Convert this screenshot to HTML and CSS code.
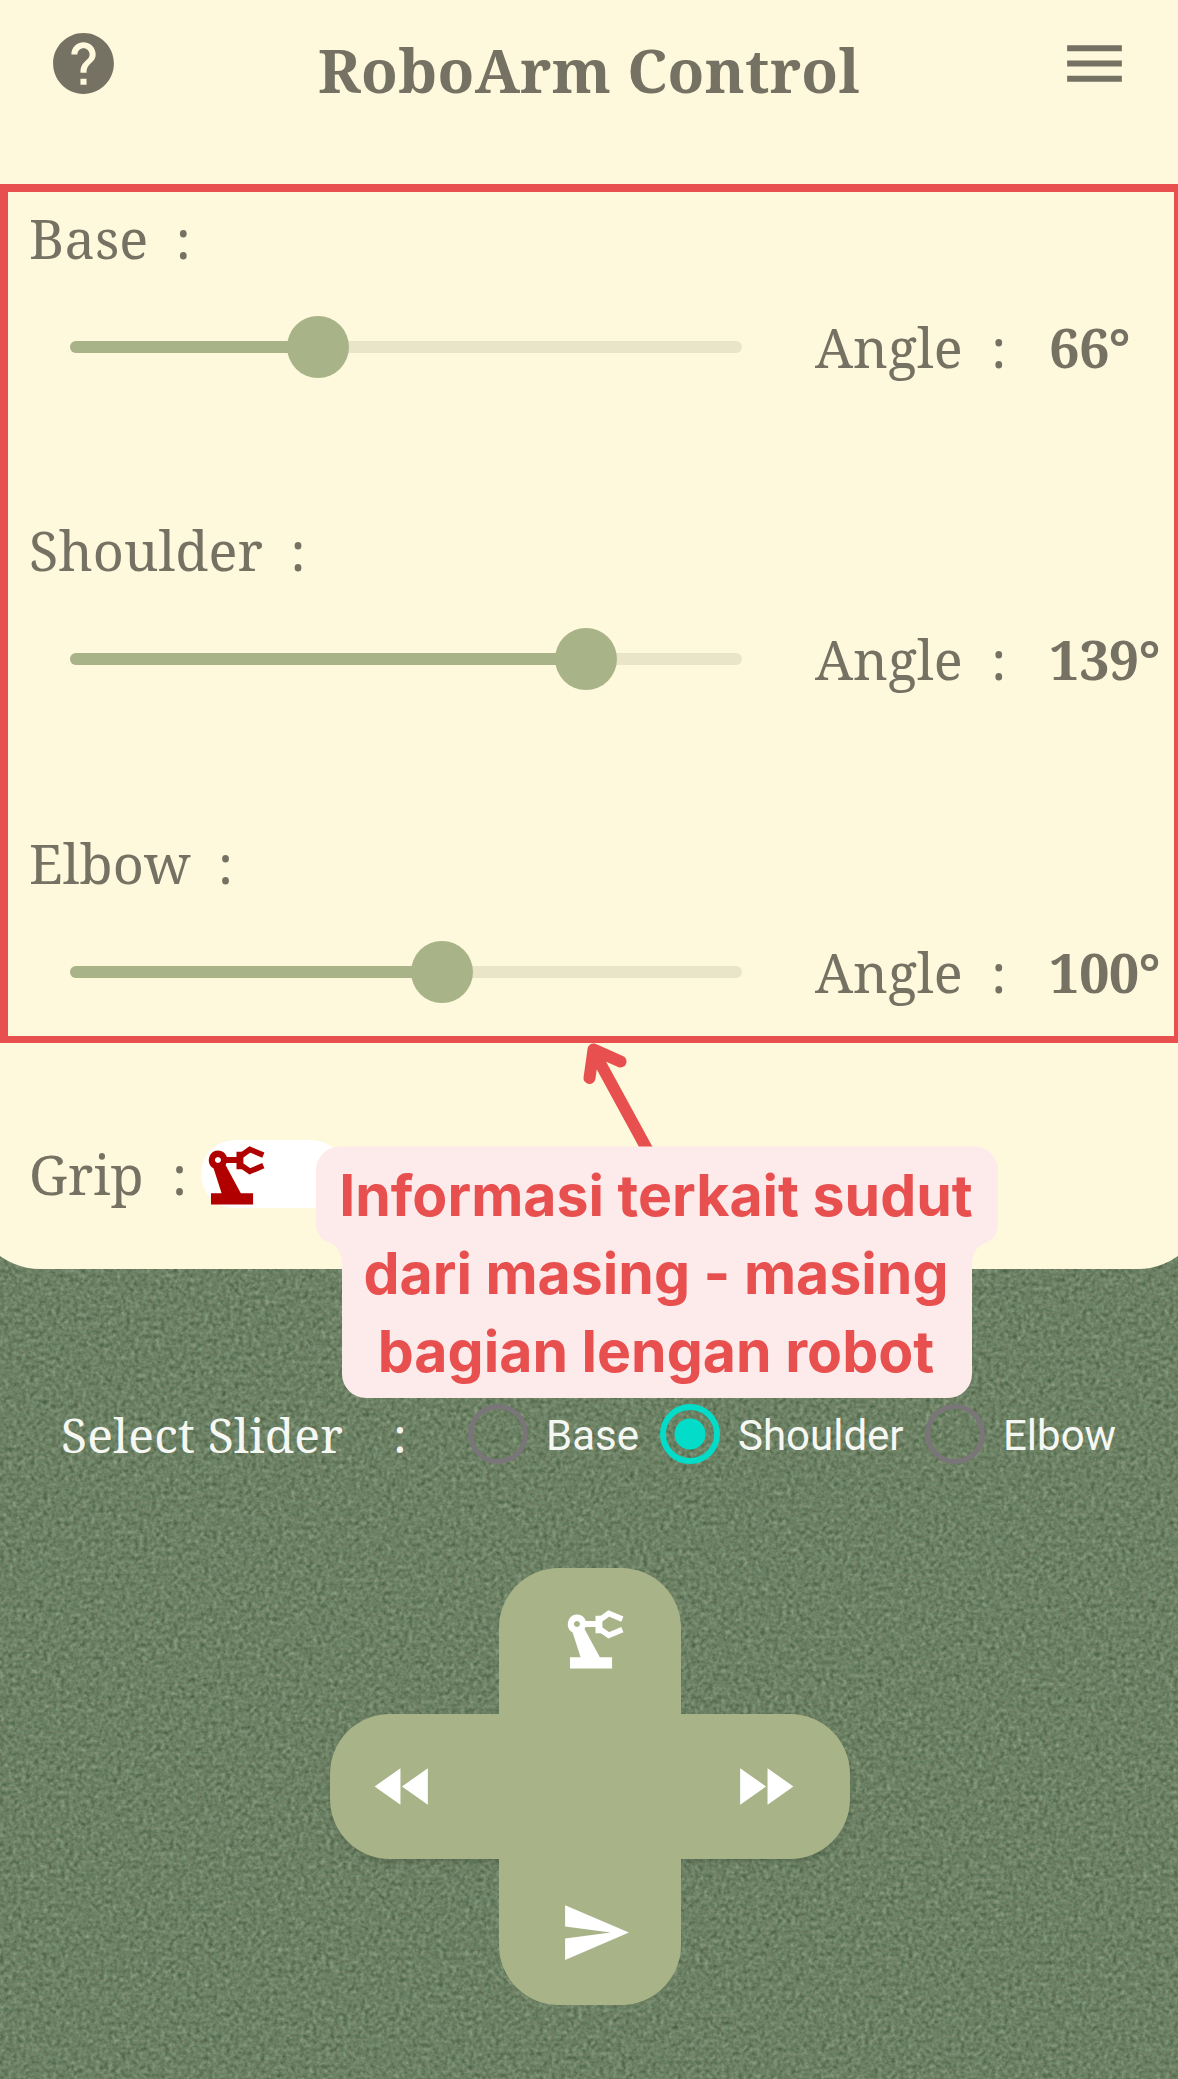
FILE: index.html
```html
<!DOCTYPE html>
<html lang="id">
<head>
<meta charset="utf-8">
<title>RoboArm Control</title>
<link rel="stylesheet" href="styles.css">
</head>
<body>
<svg class="defs" width="0" height="0" aria-hidden="true">
  <symbol id="robot" viewBox="55 62 172 177">
    <path fill="currentColor" fill-rule="evenodd" d="M85 75a29 29 0 0 1 27 20h29V79h20v53h-20v-19h-30l-3 6 46 85h37v34H64v-34h32L72 129a29 29 0 0 1 13-54zm0 20a9 9 0 1 0 .1 0z"/>
    <path fill="none" stroke="currentColor" stroke-width="17" d="M222 89 181 72 153 92v26l28 20 41-17"/>
  </symbol>
</svg>
<main class="app">
  <svg class="grain" aria-hidden="true">
    <filter id="grain" x="0" y="0" width="100%" height="100%" color-interpolation-filters="sRGB">
      <feTurbulence type="fractalNoise" baseFrequency="0.23" numOctaves="2" seed="4"/>
      <feColorMatrix values="0.21 0.21 0.06 0 0.184  0.21 0.21 0 0 0.294  0.21 0.21 0 0 0.180  0 0 0 0 1"/>
    </filter>
    <rect width="100%" height="100%" filter="url(#grain)"/>
  </svg>

  <section class="panel">
    <header class="header">
      <svg class="icon" viewBox="0 0 24 24"><path d="M12 2C6.480 2 2 6.480 2 12s4.480 10 10 10 10-4.480 10-10S17.520 2 12 2zm1 17h-2v-2h2v2zm2.070-7.750-.9.920C13.450 12.900 13 13.500 13 15h-2v-.5c0-1.100.45-2.100 1.170-2.830l1.240-1.260c.37-.36.59-.86.59-1.410 0-1.100-.9-2-2-2s-2 .9-2 2H8c0-2.210 1.790-4 4-4s4 1.790 4 4c0 .88-.36 1.680-.93 2.250z"/></svg>
      <h1 class="title">RoboArm Control</h1>
      <svg class="icon" viewBox="0 0 24 24"><path d="M3 18h18v-2H3v2zm0-5h18v-2H3v2zm0-7v2h18V6H3z"/></svg>
    </header>

    <div class="joints">
      <div class="joint">
        <div class="label"><span>Base</span><span>:</span></div>
        <div class="control">
          <div class="slider"><div class="fill" style="width:248px"></div><div class="thumb"></div></div>
          <span class="angle">Angle</span><span>:</span><b class="value">66°</b>
        </div>
      </div>
      <div class="joint">
        <div class="label"><span>Shoulder</span><span>:</span></div>
        <div class="control">
          <div class="slider"><div class="fill" style="width:516px"></div><div class="thumb"></div></div>
          <span class="angle">Angle</span><span>:</span><b class="value">139°</b>
        </div>
      </div>
      <div class="joint">
        <div class="label"><span>Elbow</span><span>:</span></div>
        <div class="control">
          <div class="slider"><div class="fill" style="width:372px"></div><div class="thumb"></div></div>
          <span class="angle">Angle</span><span>:</span><b class="value">100°</b>
        </div>
      </div>
    </div>

    <div class="grip">
      <div class="label"><span>Grip</span><span>:</span></div>
      <div class="toggle"><svg class="robot"><use href="#robot"/></svg></div>
    </div>
  </section>

  <section class="select">
    <span class="select-title">Select Slider</span><span class="select-colon">:</span>
    <span class="radio"></span><span class="option base">Base</span>
    <span class="radio on"></span><span class="option shoulder">Shoulder</span>
    <span class="radio"></span><span class="option">Elbow</span>
  </section>

  <section class="pad">
    <div class="bar across"></div>
    <div class="bar down"></div>
    <svg class="robot up"><use href="#robot"/></svg>
    <svg class="icon left" viewBox="0 0 24 24"><path d="M11 18V6l-8.500 6 8.500 6zm.5-6 8.500 6V6l-8.500 6z"/></svg>
    <svg class="icon right" viewBox="0 0 24 24"><path d="m4 18 8.500-6L4 6v12zm9-12v12l8.500-6L13 6z"/></svg>
    <svg class="icon send" viewBox="0 0 24 24"><path d="M2.010 21 23 12 2.010 3 2 10l15 2-15 2z"/></svg>
  </section>

  <aside class="callout">
    <svg class="shape" viewBox="0 0 682 358">
      <path class="arrow" d="M332 111 277.500 11M273.500 38 277.500 9.500 304.500 21.500"/>
      <path class="bubble" d="M24 106.500H658a24 24 0 0 1 24 24V182C682 195 677 200 669 203 661 206 656 214 656 224V334a24 24 0 0 1-24 24H50a24 24 0 0 1-24-24V224C26 214 22 206 14 203 6 200 0 195 0 182V130.500a24 24 0 0 1 24-24z"/>
    </svg>
    <p class="note"><span>Informasi terkait sudut</span><span>dari masing - masing</span><span>bagian lengan robot</span></p>
  </aside>
</main>
</body>
</html>
```
FILE: styles.css
```css
* { box-sizing: border-box; }
body { margin: 0; }
.defs { position: absolute; }

.app {
  position: relative;
  width: 1178px;
  height: 2079px;
  overflow: hidden;
  background: #6a7f62;
  color: #757263;
  font-family: "Noto Serif", "DejaVu Serif", serif;
  font-size: 54px;
  line-height: 60px;
}
.grain { position: absolute; inset: 0; width: 100%; height: 100%; }

/* Cream panel: corner curve starts outside the screen edges */
.panel {
  position: relative;
  height: 1269px;
  margin: 0 -28px;
  padding: 0 28px;
  border-radius: 0 0 68px 68px;
  background: #fef8dc;
}
.header {
  display: flex;
  justify-content: space-between;
  align-items: flex-start;
  height: 184px;
  padding: 27px 47px 0 47px;
}
.icon { display: block; width: 73px; height: 73px; fill: currentColor; }
.title { margin: 13px 0 0; font-size: 60px; line-height: 60px; font-weight: 700; letter-spacing: 0.3px; }

.joints {
  height: 859px;
  border: solid #e7504f;
  border-width: 8px 4px 7px 8px;
}
.joint { height: 312.300px; padding-top: 16px; }
.label { display: flex; gap: 27px; padding-left: 21px; letter-spacing: 0.1px; }
.control {
  display: grid;
  grid-template-columns: 672px 249px 58px auto;
  align-items: center;
  height: 60px;
  margin-top: 49px;
  padding-left: 62px;
}
.slider {
  display: flex;
  align-items: center;
  height: 12px;
  border-radius: 6px;
  background: #e8e5c8;
}
.fill { height: 12px; border-radius: 6px; background: #a9b388; }
.thumb { flex: none; width: 62px; height: 62px; margin-left: -31px; border-radius: 50%; background: #a9b388; }
.angle { margin-left: 73px; }
.value { font-weight: 700; letter-spacing: -0.6px; }

.grip { display: flex; align-items: center; height: 68px; margin-top: 97px; }
.grip .label { width: 201px; padding-left: 29px; gap: 28px; margin-top: -1px; }
.toggle { width: 144px; height: 68px; padding: 6px 0 0 7px; border-radius: 34px; background: #fff; color: #b00000; }
.robot { display: block; width: 57px; height: 59px; }

.select {
  position: relative;
  display: flex;
  align-items: center;
  height: 60px;
  margin-top: 135px;
  padding-left: 61px;
  color: #f5f7f2;
  font-size: 48px;
}
.select-title { width: 332px; padding-top: 2px; letter-spacing: 0.2px; }
.select-colon { width: 75px; padding-top: 2px; }
.radio { flex: none; width: 60px; height: 60px; border: 5px solid #797579; border-radius: 50%; }
.radio.on { border: 6px solid #03dcc8; background: radial-gradient(circle, #03dcc8 15px, transparent 16px); }
.option { margin: 3px 0 0 18px; font: 42px/60px Roboto, sans-serif; }
.option.base { width: 114px; }
.option.shoulder { width: 187px; }

.pad {
  position: relative;
  display: grid;
  grid-template-columns: 169px 182px 169px;
  grid-template-rows: 146px 145px 146px;
  place-items: center;
  width: 520px;
  margin: 104px 0 0 330px;
  color: #fff;
}
.bar { place-self: stretch; border-radius: 60px; background: #a9b388; }
.across { grid-area: 2 / 1 / 3 / 4; box-shadow: 0 3px 5px #3f523f66; }
.down { grid-area: 1 / 2 / 4 / 3; }
.up { grid-area: 1 / 2; margin: 0 0 3px 11px; }
.left { grid-area: 2 / 1; margin-right: 22px; }
.right { grid-area: 2 / 3; margin-right: 3px; }
.send { grid-area: 3 / 2; margin-left: 11px; }

/* Annotation lying over the screen */
.callout { position: absolute; left: 316px; top: 1040px; width: 682px; height: 358px; padding-top: 117px; }
.shape { position: absolute; inset: 0; width: 100%; height: 100%; }
.arrow { fill: none; stroke: #e7504f; stroke-width: 12px; stroke-linecap: round; stroke-linejoin: round; }
.bubble { fill: #fdeaea; }
.note {
  position: relative;
  left: -1px;
  display: flex;
  flex-direction: column;
  align-items: center;
  margin: 0;
  color: #e7504f;
  font: 700 57.200px/78px Inter, sans-serif;
  white-space: nowrap;
}
```
